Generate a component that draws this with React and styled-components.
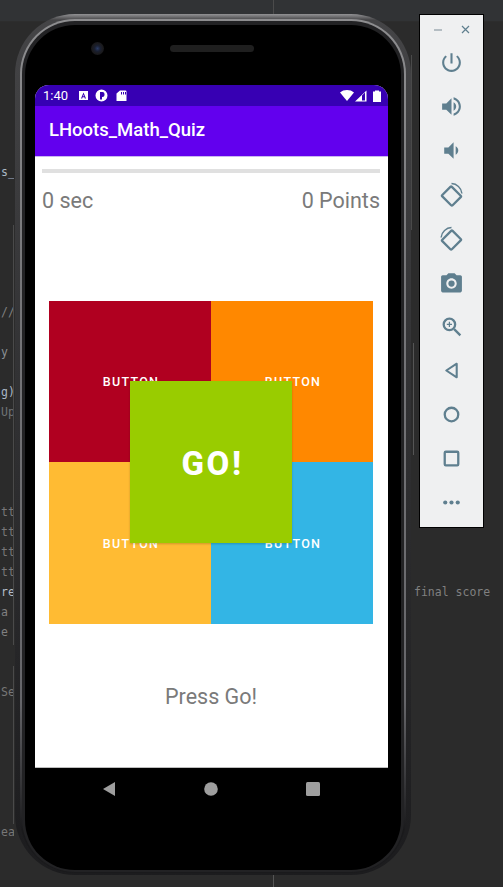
import styled, { createGlobalStyle } from "styled-components";

const GlobalStyle = createGlobalStyle`
  html, body {
    margin: 0;
    padding: 0;
    background: #2b2b2b;
    overflow: hidden;
  }
`;

const Desktop = styled.div`
  position: relative;
  width: 503px;
  height: 887px;
  overflow: hidden;
  background: #2b2b2b;
`;

const TabStrip = styled.div`
  height: 22px;
  box-sizing: border-box;
  background: #313335;
  border-bottom: 1px solid #2d2d2d;
  padding-left: 273px;
`;

const TabDivider = styled.div`
  width: 1px;
  height: 16px;
  background: #4b4b4b;
`;

const Editor = styled.div`
  padding-top: 140px;
  font-family: "DejaVu Sans Mono", "Liberation Mono", monospace;
  font-size: 11.5px;
`;

const CodeLine = styled.div`
  height: 20px;
  line-height: 20px;
  display: flex;
  justify-content: space-between;
  white-space: pre;
  color: ${(p) => p.$color || "#808080"};
`;

const GutterText = styled.span`
  width: 13px;
  padding-left: 1px;
  overflow: hidden;
`;

const RightText = styled.span`
  width: 89px;
  color: #808080;
`;

const GuideLine = styled.div`
  position: absolute;
  width: 1px;
  left: ${(p) => p.$x}px;
  top: ${(p) => p.$top}px;
  height: ${(p) => p.$height}px;
  background: ${(p) => p.$color || "#4a4a4a"};
`;

const PhoneFrame = styled.div`
  position: absolute;
  left: 15px;
  top: 14px;
  width: 396px;
  height: 861px;
  box-sizing: border-box;
  padding: 5px 5px 2px;
  border-radius: 60px;
  background: linear-gradient(180deg, #939395 0, #444446 0.7%, #333335 40%, #1c1c1e 100%);
`;

const PhoneRing = styled.div`
  height: 100%;
  box-sizing: border-box;
  padding: 2px 2px 1px;
  border-radius: 55px;
  background: linear-gradient(180deg, #8e8e90 0, #77777a 30%, #66666a 80%, #1a1a1c 95%);
`;

const PhoneTrim = styled.div`
  height: 100%;
  box-sizing: border-box;
  padding: 4px 3px 2px;
  border-radius: 53px;
  background: #222224;
`;

const Bezel = styled.div`
  height: 100%;
  box-sizing: border-box;
  padding: 0 13px 0 10px;
  border-radius: 50px;
  background: #000;
  display: flex;
  flex-direction: column;
`;

const Earpiece = styled.div`
  height: 60px;
  flex: none;
  display: flex;
  align-items: flex-start;
  padding: 17px 0 0 56px;
  box-sizing: border-box;
  gap: 66px;
`;

const Camera = styled.div`
  width: 13px;
  height: 13px;
  border-radius: 50%;
  background: radial-gradient(circle, #2c3c66 0, #1a2032 30%, #1b1b1f 55%, #111 100%);
`;

const Speaker = styled.div`
  width: 84px;
  height: 7px;
  margin-top: 3px;
  border-radius: 4px;
  background: #1f1f1f;
`;

const Screen = styled.div`
  height: 683px;
  flex: none;
  display: flex;
  flex-direction: column;
  border-radius: 14px 14px 0 0;
  overflow: hidden;
  background: #fff;
  font-family: Roboto, "Liberation Sans", sans-serif;
  border-bottom: 1px solid #bdbdbd;
  box-sizing: border-box;
`;

const StatusBar = styled.div`
  height: 21px;
  flex: none;
  background: #3700b3;
  color: #fff;
  display: flex;
  align-items: center;
  padding: 0 5px 0 8px;
  font-size: 13px;
`;

const Clock = styled.span`
  width: 32px;
`;

const StatusGroup = styled.div`
  display: flex;
  align-items: center;
  gap: ${(p) => p.$gap}px;
  margin-left: ${(p) => p.$left || 0};
`;

const AppBar = styled.div`
  height: 51px;
  flex: none;
  box-sizing: border-box;
  background: #6200ee;
  color: #fff;
  font-size: 18.5px;
  font-weight: 500;
  display: flex;
  align-items: center;
  padding: 0 14px 3px;
  border-bottom: 1px solid #c9b6f0;
`;

const Content = styled.div`
  flex: 1;
  display: flex;
  flex-direction: column;
  padding: 12px 8px 0 7px;
`;

const Progress = styled.div`
  height: 4px;
  background: #e0e0e0;
`;

const ScoreRow = styled.div`
  display: flex;
  justify-content: space-between;
  margin-top: 14px;
  font-size: 21.5px;
  line-height: 28px;
  color: #7a7a7a;
`;

const Board = styled.div`
  position: relative;
  align-self: flex-start;
  margin: 86px 0 0 7px;
  width: 324px;
  height: 323px;
  display: grid;
  grid-template-columns: 162px 162px;
  grid-template-rows: 161px 162px;
`;

const Answer = styled.div`
  background: ${(p) => p.$bg};
  color: #fff;
  font-size: 12.5px;
  font-weight: 500;
  letter-spacing: 1.3px;
  padding-left: 2px;
  display: flex;
  align-items: center;
  justify-content: center;
`;

const GoButton = styled.div`
  position: absolute;
  left: 81px;
  top: 80px;
  width: 162px;
  height: 162px;
  box-sizing: border-box;
  padding: 2px 0 0 3px;
  background: #99cc00;
  color: #fff;
  font-size: 33px;
  font-weight: 800;
  letter-spacing: 2.6px;
  display: flex;
  align-items: center;
  justify-content: center;
  box-shadow: 0 1px 2px rgba(0, 0, 0, 0.2);
`;

const Message = styled.div`
  margin-top: 59px;
  text-align: center;
  font-size: 21.5px;
  line-height: 28px;
  color: #7a7a7a;
`;

const NavBar = styled.div`
  display: flex;
  justify-content: center;
  gap: 88px;
  padding: 14px 1px 0 0;
  color: #9e9e9e;
`;

const ToolPanel = styled.div`
  position: absolute;
  left: 419px;
  top: 14px;
  width: 65px;
  height: 514px;
  box-sizing: border-box;
  border: 1px solid #000;
  background: #eff0f1;
  display: flex;
  flex-direction: column;
  align-items: center;
  color: #5f7f8f;
`;

const PanelHeader = styled.div`
  height: 25px;
  width: 100%;
  box-sizing: border-box;
  display: flex;
  align-items: center;
  justify-content: space-between;
  padding: 4px 13px 0 14px;
  color: #8c9ca5;
`;

const ToolButton = styled.div`
  height: 44px;
  width: 100%;
  flex: none;
  display: flex;
  align-items: center;
  justify-content: center;
`;

const Icon = ({ size = 24, children, box = 24, fill = "currentColor", ...rest }) => (
  <svg width={size} height={size} viewBox={`0 0 ${box} ${box}`} fill={fill} {...rest}>
    {children}
  </svg>
);

const strokeProps = { fill: "none", stroke: "currentColor", strokeWidth: 2.2 };

const tools = [
  <path key="power" d="M13 3h-2v10h2V3zm4.83 2.17l-1.42 1.42C17.99 7.86 19 9.81 19 12c0 3.87-3.13 7-7 7s-7-3.13-7-7c0-2.19 1.01-4.14 2.58-5.42L6.17 5.17C4.23 6.82 3 9.26 3 12c0 4.97 4.03 9 9 9s9-4.03 9-9c0-2.74-1.23-5.18-3.17-6.83z" />,
  <path key="up" d="M3 9v6h4l5 5V4L7 9H3zm13.5 3c0-1.77-1.02-3.29-2.5-4.03v8.05c1.48-.73 2.5-2.25 2.5-4.02zM14 3.23v2.06c2.89.86 5 3.54 5 6.71s-2.11 5.85-5 6.71v2.06c4.01-.91 7-4.49 7-8.77s-2.99-7.86-7-8.77z" />,
  <path key="down" d="M18.5 12c0-1.77-1.02-3.29-2.5-4.03v8.05c1.48-.73 2.5-2.25 2.5-4.02zM5 9v6h4l5 5V4L9 9H5z" />,
  <g key="rot-right" {...strokeProps}>
    <rect x="5" y="7" width="14" height="13" rx="1" transform="rotate(45 12 13.5)" />
    <path d="M12 1.500c5 .2 9.500 4 10 9.500" strokeWidth="1.400" />
  </g>,
  <g key="rot-left" {...strokeProps}>
    <rect x="5" y="7" width="14" height="13" rx="1" transform="rotate(-45 12 13.5)" />
    <path d="M12 1.500C7 1.700 2.500 5.500 2 11" strokeWidth="1.400" />
  </g>,
  <g key="camera">
    <path d="M9 3L7.170 5H3.500C2.700 5 2 5.700 2 6.500V20c0 .8.7 1.500 1.500 1.500h17c.8 0 1.500-.7 1.500-1.500V6.500C22 5.700 21.300 5 20.500 5h-3.670L15 3H9zm3 15c-2.760 0-5-2.240-5-5s2.240-5 5-5 5 2.240 5 5-2.240 5-5 5z" />
    <circle cx="12" cy="13" r="3" />
  </g>,
  <g key="zoom" {...strokeProps}>
    <circle cx="10" cy="10" r="5.500" />
    <path d="M14.500 14.500l6 6" strokeWidth="2.200" />
    <path d="M10 7.500v5M7.500 10h5" strokeWidth="1.200" />
  </g>,
  <path key="back" d="M17 5.500v13L7 12z" fill="none" stroke="currentColor" strokeWidth="2" strokeLinejoin="round" />,
  <circle key="home" cx="12" cy="12" r="6.500" {...strokeProps} />,
  <rect key="overview" x="5.500" y="5.500" width="13" height="13" rx="1" {...strokeProps} />,
  <g key="more">
    <circle cx="6" cy="12" r="2" />
    <circle cx="12" cy="12" r="2" />
    <circle cx="18" cy="12" r="2" />
  </g>,
];

const lines = {
  0: { left: "s_", color: "#a9b7c6" },
  7: { left: "//", color: "#808080" },
  9: { left: "y", color: "#8a8f94" },
  11: { left: "g)", color: "#a9b7c6" },
  12: { left: "Up", color: "#6f7376" },
  17: { left: "tt", color: "#777" },
  18: { left: "tt", color: "#777" },
  19: { left: "tt", color: "#777" },
  20: { left: "tt", color: "#777" },
  21: { left: "re", color: "#b4bcc4", right: "final score" },
  22: { left: "a", color: "#808080" },
  23: { left: "e", color: "#808080" },
  26: { left: "Se", color: "#777" },
  33: { left: "ea", color: "#777" },
};

const answers = ["#b00020", "#ff8800", "#ffbb33", "#33b5e5"];

const App = () => (
  <>
    <GlobalStyle />
    <Desktop>
      <TabStrip>
        <TabDivider />
      </TabStrip>
      <Editor>
        {Array.from({ length: 34 }, (_, i) => (
          <CodeLine key={i} $color={lines[i]?.color}>
            <GutterText>{lines[i]?.left}</GutterText>
            <RightText>{lines[i]?.right}</RightText>
          </CodeLine>
        ))}
      </Editor>
      <GuideLine $x={13} $top={225} $height={420} />
      <GuideLine $x={13} $top={666} $height={158} />
      <GuideLine $x={411} $top={55} $height={175} />
      <GuideLine $x={413} $top={343} $height={112} $color="#555" />
      <GuideLine $x={273} $top={875} $height={12} $color="#555" />

      <PhoneFrame>
        <PhoneRing>
          <PhoneTrim>
            <Bezel>
              <Earpiece>
                <Camera />
                <Speaker />
              </Earpiece>
              <Screen>
                <StatusBar>
                  <Clock>1:40</Clock>
                  <StatusGroup $gap={6} $left="3px">
                    <Icon size={11} box={11}>
                      <path fillRule="evenodd" d="M1 1h9v9H1zM5.500 2.500L3 8.500h1.200l.4-1.200h1.800l.4 1.200H8zM5 6.200l.5-1.700.5 1.700z" />
                    </Icon>
                    <Icon size={13} box={13}>
                      <path fillRule="evenodd" d="M6.500.5a6 6 0 1 0 0 12 6 6 0 0 0 0-12zM5 3h2.500a2 2 0 0 1 2 2v1a2 2 0 0 1-2 2H7v2.500H5z" />
                    </Icon>
                    <Icon size={11} box={11} style={{ marginLeft: 2 }}>
                      <path fillRule="evenodd" d="M4 .5h5.500a1 1 0 0 1 1 1v9a1 1 0 0 1-1 1h-8a1 1 0 0 1-1-1V3.500zM5 2v2.500h1V2zM7 2v2.500h1V2zM9 2v2.500h1V2z" />
                    </Icon>
                  </StatusGroup>
                  <StatusGroup $gap={1} $left="auto">
                    <Icon size={14} box={14}>
                      <path d="M0 3.500C3.800.2 10.200.2 14 3.500L7 12z" />
                    </Icon>
                    <Icon size={12} box={12}>
                      <path fillRule="evenodd" d="M0 11.500L11.500.5v11zM7 5.500v5h3v-8z" />
                    </Icon>
                    <Icon size={12} box={12} style={{ marginLeft: 3 }}>
                      <path d="M4 .5h4v1h2v10.500H2V1.500h2z" />
                    </Icon>
                  </StatusGroup>
                </StatusBar>
                <AppBar>LHoots_Math_Quiz</AppBar>
                <Content>
                  <Progress />
                  <ScoreRow>
                    <span>0 sec</span>
                    <span>0 Points</span>
                  </ScoreRow>
                  <Board>
                    {answers.map((bg) => (
                      <Answer key={bg} $bg={bg}>
                        BUTTON
                      </Answer>
                    ))}
                    <GoButton>GO!</GoButton>
                  </Board>
                  <Message>Press Go!</Message>
                </Content>
              </Screen>
              <NavBar>
                <Icon size={14} box={14}>
                  <path d="M13 0v14L1 7z" />
                </Icon>
                <Icon size={14} box={14}>
                  <circle cx="7" cy="7" r="6.800" />
                </Icon>
                <Icon size={14} box={14}>
                  <rect width="14" height="14" y="0" rx="1.500" />
                </Icon>
              </NavBar>
            </Bezel>
          </PhoneTrim>
        </PhoneRing>
      </PhoneFrame>

      <ToolPanel>
        <PanelHeader>
          <Icon size={8} box={8} fill="none" stroke="currentColor" strokeWidth="1.200">
            <path d="M0 4h8" />
          </Icon>
          <Icon size={9} box={9} fill="none" stroke="#5f7f8f" strokeWidth="1.200">
            <path d="M1 1l7 7M8 1L1 8" />
          </Icon>
        </PanelHeader>
        {tools.map((tool) => (
          <ToolButton key={tool.key}>
            <Icon size={25}>{tool}</Icon>
          </ToolButton>
        ))}
      </ToolPanel>
    </Desktop>
  </>
);

export default App;
